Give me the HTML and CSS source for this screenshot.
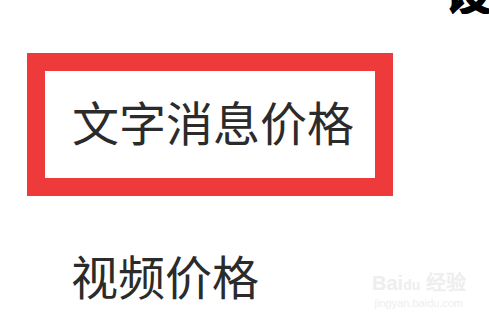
FILE: index.html
```html
<!DOCTYPE html>
<html lang="zh-CN">
<head>
  <meta charset="UTF-8" />
  <title>价格设置</title>
  <link rel="stylesheet" href="styles.css">
</head>
<body>
  <div class="top-bar">
    <span class="top-title">设</span>
  </div>

  <div class="option highlighted">
    <span class="option-label">文字消息价格</span>
  </div>

  <div class="option">
    <span class="option-label">视频价格</span>
  </div>

  <div class="watermark">
    <div class="wm-logo">Bai<span class="wm-du">du</span> 经验</div>
    <div class="wm-url">jingyan.baidu.com</div>
  </div>
</body>
</html>
```

FILE: styles.css
```css
body {
  margin: 0;
  background: #fff;
  font-family: "Noto Sans CJK SC", "Noto Sans", sans-serif;
  color: #2b2b2b;
  width: 489px;
  height: 327px;
  overflow: hidden;
  position: relative;
}

.top-bar {
  height: 14px;
  overflow: hidden;
  display: flex;
  justify-content: flex-end;
}

.top-title {
  font-size: 48px;
  font-weight: 900;
  color: #000;
  line-height: 48px;
  margin-top: -35px;
  margin-right: -4px;
}

.option {
  margin-left: 27px;
  display: flex;
  align-items: center;
}

.option-label {
  font-size: 47px;
  line-height: 1;
}

.highlighted {
  box-sizing: border-box;
  margin-top: 39px;
  width: 366px;
  height: 143px;
  border: 18px solid #ee3a3a;
  padding: 0 0 9px 27px;
}

.option + .option {
  margin-top: 55px;
  padding-left: 44px;
}

.watermark {
  position: absolute;
  left: 372px;
  top: 272px;
  color: #eeeeee;
  font-family: "Liberation Sans", sans-serif;
  text-align: center;
}

.wm-logo {
  font-size: 20px;
  font-weight: bold;
  line-height: 22px;
}

.wm-du {
  font-size: 14px;
}

.wm-url {
  font-size: 11px;
  line-height: 14px;
}
```
